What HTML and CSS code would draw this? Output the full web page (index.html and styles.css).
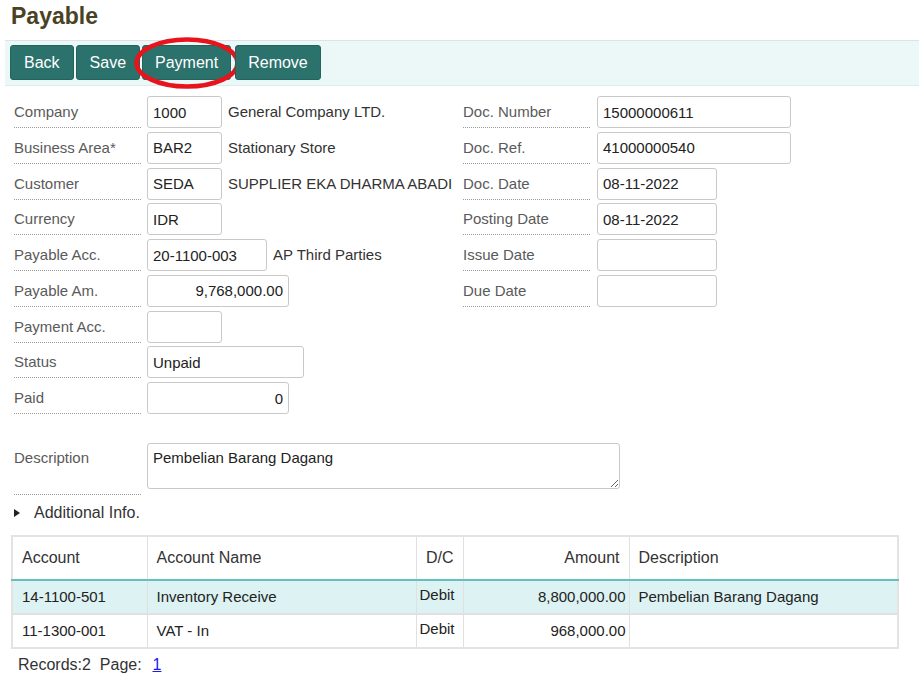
FILE: index.html
```html
<!DOCTYPE html>
<html>
<head>
<meta charset="utf-8">
<link rel="stylesheet" href="styles.css">
</head>
<body>
<div class="page">
  <h1 class="title">Payable</h1>
  <div class="toolbar">
    <button class="btn">Back</button>
    <button class="btn">Save</button>
    <button class="btn btn-pay"><svg class="mark" width="110" height="56" viewBox="0 0 110 56"><ellipse cx="55" cy="28" rx="50.5" ry="23.5" fill="none" stroke="#e8141c" stroke-width="4.5"/></svg>Payment</button>
    <button class="btn btn-gap">Remove</button>
  </div>

  <div class="form">
    <div class="col col-left">
      <div class="row"><div class="label">Company</div><input class="inp w75" value="1000"><span class="side">General Company LTD.</span></div>
      <div class="row"><div class="label">Business Area*</div><input class="inp w75" value="BAR2"><span class="side">Stationary Store</span></div>
      <div class="row"><div class="label">Customer</div><input class="inp w75" value="SEDA"><span class="side">SUPPLIER EKA DHARMA ABADI</span></div>
      <div class="row"><div class="label">Currency</div><input class="inp w75" value="IDR"></div>
      <div class="row"><div class="label">Payable Acc.</div><input class="inp w120" value="20-1100-003"><span class="side">AP Third Parties</span></div>
      <div class="row"><div class="label">Payable Am.</div><input class="inp w142 num" value="9,768,000.00"></div>
      <div class="row"><div class="label">Payment Acc.</div><input class="inp w75" value=""></div>
      <div class="row"><div class="label">Status</div><input class="inp w157" value="Unpaid"></div>
      <div class="row"><div class="label">Paid</div><input class="inp w142 num" value="0"></div>
    </div>
    <div class="col col-right">
      <div class="row"><div class="label">Doc. Number</div><input class="inp w194" value="15000000611"></div>
      <div class="row"><div class="label">Doc. Ref.</div><input class="inp w194" value="41000000540"></div>
      <div class="row"><div class="label">Doc. Date</div><input class="inp w120" value="08-11-2022"></div>
      <div class="row"><div class="label">Posting Date</div><input class="inp w120" value="08-11-2022"></div>
      <div class="row"><div class="label">Issue Date</div><input class="inp w120" value=""></div>
      <div class="row"><div class="label">Due Date</div><input class="inp w120" value=""></div>
    </div>
  </div>

  <div class="desc-row">
    <div class="label label-desc">Description</div>
    <textarea class="desc">Pembelian Barang Dagang</textarea>
  </div>

  <div class="more"><span class="tri"></span>Additional Info.</div>

  <table class="grid">
    <colgroup>
      <col class="c1"><col class="c2"><col class="c3"><col class="c4"><col class="c5">
    </colgroup>
    <thead>
      <tr><th>Account</th><th>Account Name</th><th class="r">D/C</th><th class="r">Amount</th><th>Description</th></tr>
    </thead>
    <tbody>
      <tr class="sel"><td>14-1100-501</td><td>Inventory Receive</td><td class="dc">Debit</td><td class="r amt">8,800,000.00</td><td>Pembelian Barang Dagang</td></tr>
      <tr><td>11-1300-001</td><td>VAT - In</td><td class="dc">Debit</td><td class="r amt">968,000.00</td><td></td></tr>
    </tbody>
  </table>

  <div class="pager">Records:2&nbsp; Page:&nbsp; <a href="#" class="plink">1</a></div>
</div>
</body>
</html>
```
FILE: styles.css
```css
* { box-sizing: border-box; }
html, body { margin: 0; padding: 0; background: #fff; }
body { font-family: "Liberation Sans", Arial, sans-serif; color: #333; font-size: 15px; }
.page { width: 919px; }

.title {
  margin: 0 0 10px 0;
  padding: 2px 11px 0;
  font-size: 23px;
  line-height: 28px;
  font-weight: bold;
  color: #4a4224;
}

.toolbar {
  margin-left: 5px;
  height: 46px;
  border-top: 1px solid #dde3e4;
  border-bottom: 1px solid #d6eef0;
  background: #ecf8f8;
  padding: 4px 0 0 5px;
  display: flex;
  align-items: flex-start;
}
.btn {
  position: relative;
  height: 35px;
  margin-right: 2px;
  padding: 0 13px;
  border: 1px solid #24625e;
  border-radius: 3px;
  background: #2b716c;
  color: #fff;
  font-family: "Liberation Sans", Arial, sans-serif;
  font-size: 16px;
  line-height: 33px;
  cursor: pointer;
}
.btn-pay { padding: 0 12px; }
.btn-gap { margin-left: 2px; padding: 0 12px; }
.mark {
  position: absolute;
  left: -11px;
  top: -11px;
  pointer-events: none;
}

.form { display: flex; padding-left: 14px; margin-top: 10px; }
.col-left { width: 449px; }
.row { display: flex; align-items: flex-start; height: 35.75px; }
.label {
  width: 127px;
  height: 32px;
  padding-top: 6px;
  line-height: 20px;
  color: #5a5a5a;
  border-bottom: 1px dotted #9a9a9a;
  flex: none;
}
.inp {
  margin-left: 6px;
  height: 32px;
  border: 1px solid #c9c9c9;
  border-radius: 3px;
  padding: 0 5px;
  font-family: "Liberation Sans", Arial, sans-serif;
  font-size: 15px;
  color: #222;
  background: #fff;
  flex: none;
}
.col-right .inp { margin-left: 7px; }
.w75 { width: 75px; }
.w120 { width: 120px; }
.w142 { width: 142px; }
.w157 { width: 157px; }
.w194 { width: 194px; }
.num { text-align: right; }
.side { margin-left: 6px; line-height: 32px; color: #333; white-space: nowrap; }

.desc-row { display: flex; align-items: flex-start; padding-left: 14px; margin-top: 25px; }
.label-desc { height: 52px; padding-top: 5px; }
.desc {
  margin-left: 6px;
  width: 473px;
  height: 46px;
  border: 1px solid #c9c9c9;
  border-radius: 3px;
  padding: 5px 5px;
  font-family: "Liberation Sans", Arial, sans-serif;
  font-size: 15px;
  line-height: 17px;
  color: #222;
  resize: both;
}

.more {
  margin: 8px 0 0 14px;
  line-height: 20px;
  font-size: 16px;
  color: #333;
  display: flex;
  align-items: center;
}
.tri {
  width: 0; height: 0;
  border-top: 4.5px solid transparent;
  border-bottom: 4.5px solid transparent;
  border-left: 6px solid #222;
  margin: 0 14px 0 0;
}

.grid {
  margin: 12px 0 0 11px;
  width: 887px;
  border-collapse: collapse;
  border: 2px solid #e3e3e3;
  table-layout: fixed;
  color: #222;
}
.c1 { width: 135px; }
.c2 { width: 269px; }
.c3 { width: 47px; }
.c4 { width: 166px; }
.c5 { width: 269px; }
.grid th {
  height: 44px;
  font-weight: normal;
  font-size: 16px;
  text-align: left;
  padding: 0 9px;
  border-left: 1px solid #e0e0e0;
  border-bottom: 2px solid #63c1bc;
  color: #333;
}
.grid td {
  height: 34px;
  font-size: 15px;
  padding: 0 9px;
  border-left: 1px solid #e0e0e0;
  border-bottom: 2px solid #e0e0e0;
  white-space: nowrap;
}
.grid tbody tr:last-child td { border-bottom: 1px solid #e0e0e0; }
.grid .r { text-align: right; }
.grid td.amt { padding-right: 3px; }
.grid td.dc { vertical-align: top; padding: 5px 3px 0 3px; }
.grid tr.sel td { background: #dcf2f3; }

.pager { margin: 6px 0 0 18px; line-height: 20px; font-size: 16px; color: #333; }
.plink { color: #1a1aee; text-decoration: underline; margin-left: 2px; }
```
